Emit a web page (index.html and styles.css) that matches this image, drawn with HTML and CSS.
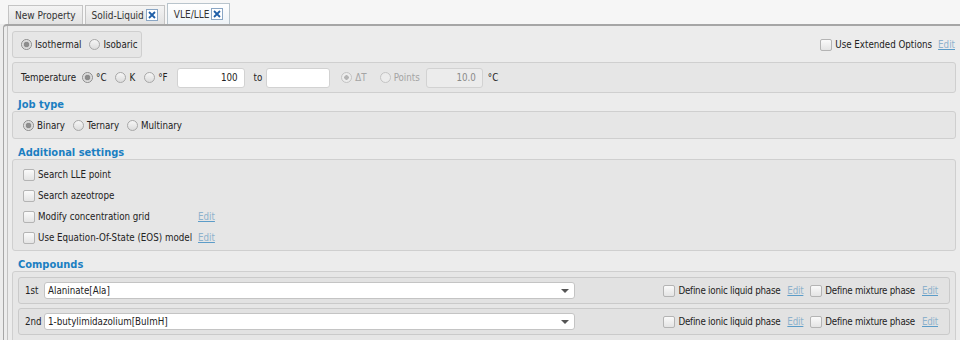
FILE: index.html
```html
<!DOCTYPE html>
<html lang="en">
<head>
    <meta charset="UTF-8">
    <title>VLE/LLE</title>
    <link rel="stylesheet" href="styles.css">
</head>
<body>
    <div class="tabs">
        <div class="tab">New Property</div>
        <div class="tab">Solid-Liquid <span class="close"><svg width="10" height="10" viewBox="0 0 10 10"><path d="M2 2L8 8M8 2L2 8"/></svg></span></div>
        <div class="tab active">VLE/LLE <span class="close"><svg width="10" height="10" viewBox="0 0 10 10"><path d="M2 2L8 8M8 2L2 8"/></svg></span></div>
    </div>

    <div class="panel">
        <div class="content">
            <div class="top-row">
                <div class="box mode-box">
                    <label class="radio checked"><span class="dot"></span>Isothermal</label>
                    <label class="radio"><span class="dot"></span>Isobaric</label>
                </div>
                <div class="extended">
                    <label class="check"><span class="tick"></span>Use Extended Options</label>
                    <a class="edit">Edit</a>
                </div>
            </div>

            <div class="box temp-box">
                <span class="lbl">Temperature</span>
                <label class="radio checked"><span class="dot"></span>°C</label>
                <label class="radio"><span class="dot"></span>K</label>
                <label class="radio"><span class="dot"></span>°F</label>
                <span class="field">100</span>
                <span class="lbl to">to</span>
                <span class="field range-end"></span>
                <label class="radio disabled checked delta"><span class="dot"></span>ΔT</label>
                <label class="radio disabled"><span class="dot"></span>Points</label>
                <span class="field small disabled">10.0</span>
                <span class="lbl">°C</span>
            </div>

            <h3 class="section first">Job type</h3>
            <div class="box job-box">
                <label class="radio checked"><span class="dot"></span>Binary</label>
                <label class="radio"><span class="dot"></span>Ternary</label>
                <label class="radio"><span class="dot"></span>Multinary</label>
            </div>

            <h3 class="section">Additional settings</h3>
            <div class="box settings-box">
                <div class="setting"><label class="check"><span class="tick"></span>Search LLE point</label></div>
                <div class="setting"><label class="check"><span class="tick"></span>Search azeotrope</label></div>
                <div class="setting"><label class="check"><span class="tick"></span>Modify concentration grid</label><a class="edit">Edit</a></div>
                <div class="setting"><label class="check"><span class="tick"></span>Use Equation-Of-State (EOS) model</label><a class="edit">Edit</a></div>
            </div>

            <h3 class="section last">Compounds</h3>
            <div class="box compounds-box">
                <div class="compound">
                    <span class="ord">1st</span>
                    <div class="select">Alaninate[Ala]<span class="arrow"></span></div>
                    <div class="phase">
                        <label class="check"><span class="tick"></span>Define ionic liquid phase</label>
                        <a class="edit">Edit</a>
                        <label class="check"><span class="tick"></span>Define mixture phase</label>
                        <a class="edit">Edit</a>
                    </div>
                </div>
                <div class="compound">
                    <span class="ord">2nd</span>
                    <div class="select">1-butylimidazolium[BuImH]<span class="arrow"></span></div>
                    <div class="phase">
                        <label class="check"><span class="tick"></span>Define ionic liquid phase</label>
                        <a class="edit">Edit</a>
                        <label class="check"><span class="tick"></span>Define mixture phase</label>
                        <a class="edit">Edit</a>
                    </div>
                </div>
            </div>
        </div>
    </div>
</body>
</html>
```

FILE: styles.css
```css
* {
    margin: 0;
    padding: 0;
    box-sizing: border-box;
}

body {
    font-family: "DejaVu Sans Condensed", "DejaVu Sans", sans-serif;
    font-size: 9.7px;
    color: #222;
    background: #ececec;
    height: 340px;
    overflow: hidden;
}

/* Tabs */
.tabs {
    display: flex;
    align-items: flex-end;
    height: 24px;
    padding-left: 8px;
    gap: 2px;
    background: #f6f6f6;
}

.tab {
    height: 19px;
    display: flex;
    align-items: center;
    padding: 0 6px;
    border: 1px solid #c4c4c4;
    border-bottom: none;
    background: linear-gradient(#f4f4f4, #e2e2e2);
    color: #333;
    font-size: 10px;
}

.tab.active {
    height: 21px;
    background: linear-gradient(#ffffff, #eef3f7);
    border-color: #b8c4cc;
}

.close {
    display: inline-flex;
    align-items: center;
    justify-content: center;
    width: 12px;
    height: 12px;
    margin-left: 2px;
    border: 1px solid #8aa6c4;
    background: #fff;
}

.close path {
    stroke: #1f5fa8;
    stroke-width: 1.8;
    fill: none;
}

/* Panel */
.panel {
    margin-left: 3px;
    border-top: 2px solid #a6a6a6;
    border-left: 1px solid #a6a6a6;
    border-top-left-radius: 4px;
    height: 316px;
}

.content {
    margin-left: 3px;
    border-left: 1px solid #c2c2c2;
    padding: 5px 4px 0 4px;
    height: 100%;
}

.box {
    background: #e6e6e6;
    border: 1px solid #cfcfcf;
    border-radius: 3px;
}

.top-row {
    display: flex;
    justify-content: space-between;
    align-items: center;
}

.mode-box {
    width: 130px;
    height: 27px;
    display: flex;
    align-items: center;
    gap: 8px;
    padding-left: 8px;
}

.extended {
    display: flex;
    align-items: center;
    gap: 6px;
    padding-right: 1px;
}

.temp-box {
    margin-top: 4px;
    height: 31px;
    display: flex;
    align-items: center;
    padding-left: 8px;
}

.lbl {
    margin-right: 6px;
}

.lbl.to {
    margin: 0 4px 0 9px;
}

.temp-box .radio {
    margin-right: 9px;
}

.temp-box .radio.delta {
    margin-left: 11px;
    margin-right: 13px;
}

.field {
    width: 68px;
    height: 20px;
    background: #fff;
    border: 1px solid #d2d2d2;
    border-radius: 3px;
    text-align: right;
    padding: 3px 6px 0 0;
}

.field.range-end {
    width: 64px;
}

.field.small {
    width: 57px;
    margin-left: -3px;
    margin-right: 5px;
}

.field.disabled {
    background: #ececec;
    color: #8a8a8a;
}

/* Radios and checkboxes */
.radio, .check {
    display: inline-flex;
    align-items: center;
    white-space: nowrap;
}

.dot {
    width: 11px;
    height: 11px;
    margin-right: 3px;
    border: 1px solid #a8a8a8;
    border-radius: 50%;
    background: linear-gradient(#f6f6f6, #dcdcdc);
}

.radio.checked .dot {
    background: radial-gradient(circle, #8c8c8c 0 2.5px, #cfcfcf 3px, #f2f2f2 5px);
    border-color: #8c8c8c;
}

.radio.disabled {
    color: #a4a4a4;
}

.radio.disabled .dot {
    border-color: #c4c4c4;
    background: #ececec;
}

.radio.disabled.checked .dot {
    background: radial-gradient(circle, #b4b4b4 0 2px, #ececec 2.5px);
}

.tick {
    width: 12px;
    height: 12px;
    margin-right: 3px;
    border: 1px solid #b4b4b4;
    border-radius: 2px;
    background: linear-gradient(#fafafa, #e4e4e4);
}

.edit {
    color: #8fb2cc;
    text-decoration: underline;
    text-decoration-color: #5c9cc8;
    cursor: pointer;
}

/* Sections */
.section {
    color: #1b7fc2;
    font-size: 11px;
    font-weight: bold;
    margin: 7px 0 0 6px;
    height: 13px;
}

.section.first {
    margin-top: 5px;
}

.section.last {
    margin-top: 7px;
}

.job-box {
    height: 28px;
    display: flex;
    align-items: center;
    padding-left: 10px;
    gap: 8px;
}

.settings-box {
    height: 92px;
    padding: 4px 0 0 10px;
}

.setting {
    height: 21px;
    display: flex;
    align-items: center;
}

.setting .check {
    width: 175px;
}

/* Compounds */
.compounds-box {
    height: 80px;
    padding: 5px 4px 0 5px;
}

.compound {
    display: flex;
    align-items: center;
    height: 27px;
    margin-bottom: 4px;
    background: #e2e2e2;
    border: 1px solid #cacaca;
    border-radius: 3px;
    padding-left: 6px;
    margin-right: 1px;
}

.ord {
    width: 19px;
}

.select {
    position: relative;
    width: 531px;
    height: 17px;
    background: #fff;
    border: 1px solid #c4c4c4;
    border-radius: 3px;
    padding: 2px 0 0 3px;
}

.arrow {
    position: absolute;
    right: 5px;
    top: 6px;
    border-left: 4px solid transparent;
    border-right: 4px solid transparent;
    border-top: 4px solid #555;
}

.phase {
    margin-left: auto;
    display: flex;
    align-items: center;
    gap: 7px;
    padding-right: 11px;
    letter-spacing: -0.22px;
}
```
